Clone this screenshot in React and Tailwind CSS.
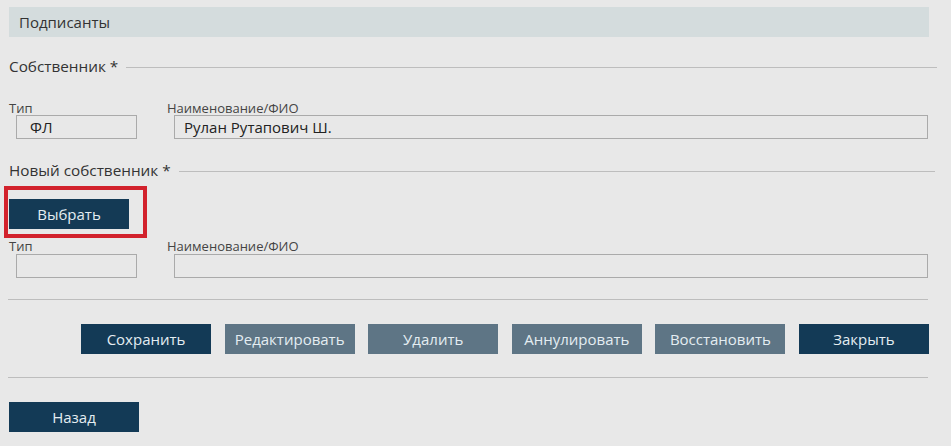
export default function App() {
  const font = { fontFamily: '"Open Sans", "Noto Sans", sans-serif' };
  const btn = "w-[130px] h-[30px] flex items-center justify-center text-[15px] text-[#e4edf2]";
  return (
    <div className="w-[951px] h-[446px] bg-[#e8e8e8] overflow-hidden" style={font}>
      <div className="ml-[9px] w-[920px] pt-[7px]">
        <div className="h-[30px] bg-[#d4dcdd] flex items-center pl-[10px] text-[15px] text-[#333]">
          Подписанты
        </div>

        <div className="mt-[20px] h-[20px] flex items-center mr-[-8px]">
          <span className="text-[15.3px] text-[#333] leading-none">Собственник *</span>
          <div className="flex-1 h-px bg-[#bdbdbd] ml-[8px]" />
        </div>

        <div className="mt-[24px] flex">
          <div className="w-[158px]">
            <div className="h-[14px] text-[13px] leading-[14px] text-[#444]">Тип</div>
            <div className="ml-[7px] w-[121px] h-[24px] border border-[#aaaaaa] flex items-center pl-[13px] text-[15px] text-[#222]">ФЛ</div>
          </div>
          <div className="flex-1">
            <div className="h-[14px] text-[13px] leading-[14px] text-[#444]">Наименование/ФИО</div>
            <div className="ml-[7px] mr-[1px] h-[24px] border border-[#aaaaaa] flex items-center pl-[9px] text-[15px] text-[#222]">Рулан Рутапович Ш.</div>
          </div>
        </div>

        <div className="mt-[22px] h-[20px] flex items-center mr-[-6px]">
          <span className="text-[15.3px] text-[#333] leading-none">Новый собственник *</span>
          <div className="flex-1 h-px bg-[#bdbdbd] ml-[8px]" />
        </div>

        <div className="mt-[18px] relative w-[120px]">
          <div className="w-[120px] h-[30px] flex items-center justify-center text-[15px] text-[#e4edf2] bg-[#143a55]">Выбрать</div>
          <div className="absolute -left-[5px] -top-[13px] w-[143px] h-[52px] border-[4px] border-[#d2222c]" />
        </div>

        <div className="mt-[10px] flex">
          <div className="w-[158px]">
            <div className="h-[15px] text-[13px] leading-[14px] text-[#444]">Тип</div>
            <div className="ml-[7px] w-[121px] h-[24px] border border-[#aaaaaa]" />
          </div>
          <div className="flex-1">
            <div className="h-[15px] text-[13px] leading-[14px] text-[#444]">Наименование/ФИО</div>
            <div className="ml-[7px] mr-[1px] h-[24px] border border-[#aaaaaa]" />
          </div>
        </div>

        <div className="mt-[21px] h-px bg-[#bdbdbd] ml-[-1px] mr-[1px]" />

        <div className="mt-[24px] flex justify-end gap-[13.6px]">
          <div className={btn + " bg-[#133a56]"}>Сохранить</div>
          <div className={btn + " bg-[#5e7585]"}>Редактировать</div>
          <div className={btn + " bg-[#5e7585]"}>Удалить</div>
          <div className={btn + " bg-[#5e7585]"}>Аннулировать</div>
          <div className={btn + " bg-[#5e7585]"}>Восстановить</div>
          <div className={btn + " bg-[#133a56]"}>Закрыть</div>
        </div>

        <div className="mt-[23px] h-px bg-[#bdbdbd] ml-[-1px] mr-[1px]" />

        <div className="mt-[24px]">
          <div className={btn + " bg-[#133a56]"}>Назад</div>
        </div>
      </div>
    </div>
  );
}
